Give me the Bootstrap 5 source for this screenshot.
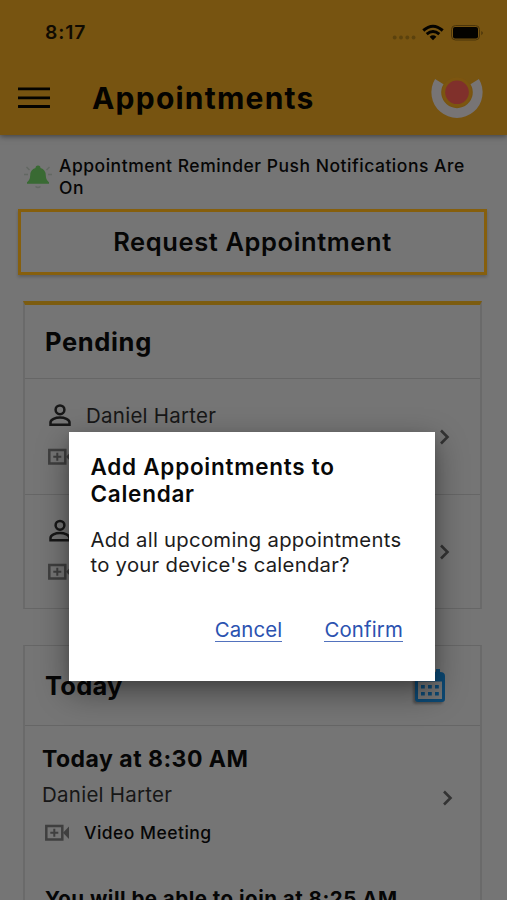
<!DOCTYPE html>
<html lang="en">
<head>
<meta charset="utf-8">
<meta name="viewport" content="width=device-width, initial-scale=1">
<title>Appointments</title>
<link rel="stylesheet" href="https://cdn.jsdelivr.net/npm/bootstrap@5.3.0/dist/css/bootstrap.min.css">
<style>
body{font-family:Inter,"Liberation Sans",sans-serif;background:#757575;color:#060606;height:900px;overflow:hidden}
.screen{height:900px}
svg{display:block;flex:none}
.topbar{height:135px;background:#775411;color:#040300;box-shadow:0 1px 6px rgba(0,0,0,.5)}
.statusbar{height:65px;padding:0 23px 0 45px}
.clock{font-size:19.3px;font-weight:600;letter-spacing:.85px;line-height:1;padding-top:1px;color:#100b02}
.titlebar{height:65px;padding:0 23px 0 18px}
.page-title{font-size:30px;font-weight:700;letter-spacing:1.22px;line-height:36px;margin:0 0 0 42px}
.notice{padding:20px 24px 0;height:74px;font-size:17.5px;font-weight:500;letter-spacing:.52px;line-height:22px}
.bell{margin:9px 7px 0 0}
.request{margin:0 20px 0 18px;height:66px;border:3px solid #865f0d;border-radius:0;font-size:25.5px;font-weight:600;letter-spacing:.6px;color:#060606;box-shadow:0 2px 3px rgba(0,0,0,.2)}
.panel{margin:0 25px 0 23px;border:1px solid #666;border-left:2px solid #6a6a6a;border-right:2px solid #6a6a6a}
.panel-gold{margin-top:26px;border-top:4px solid #7c5c10}
.panel-today{margin-top:36px;height:300px}
.panel-head{font-size:25.5px;font-weight:700;line-height:30px;margin:0;padding:0 34px 0 20px;border-bottom:1px solid #666}
.head-pending{height:74px;letter-spacing:.65px}
.head-today{height:80px;letter-spacing:.25px}
.entry{padding:0 30px 0 23px;height:115px}
.entry + .entry{border-top:1px solid #666;height:114px}
.who{margin-bottom:20px}
.person-name{font-size:20.5px;letter-spacing:.25px;line-height:24px;color:#171717}
.visit{padding:19px 27px 0 17px}
.slot{font-size:23px;font-weight:700;letter-spacing:.48px;line-height:28px}
.kind{font-size:17.5px;font-weight:500;letter-spacing:.48px;line-height:22px}
.join{font-size:20.5px;font-weight:700;letter-spacing:.5px;line-height:24px;white-space:nowrap;margin:43px 0 0 20px}
.dialog-box{left:69px;top:432px;width:366px;height:249px;padding:21px 22px;background:#fff;box-shadow:0 11px 30px rgba(0,0,0,.42),0 4px 9px rgba(0,0,0,.12)}
.dialog-title{font-size:22.5px;font-weight:600;letter-spacing:.74px;line-height:27px;margin:0 0 0 -.5px;color:#080808}
.dialog-text{font-size:20.3px;letter-spacing:.27px;line-height:25px;margin:20px -10px 0 -.5px;color:#1c1c1c}
.dialog-actions{gap:42px;margin:41px 10px 0 0}
.dialog-link{font-size:20.4px;letter-spacing:.15px;line-height:23px;color:#2b52b0;text-decoration:none;border-bottom:1.5px solid #5272bd}
</style>
</head>
<body>
<svg width="0" height="0" class="position-absolute" aria-hidden="true">
  <symbol id="person" viewBox="0 0 24 23"><g fill="none" stroke="#171717" stroke-width="2.500"><circle cx="12" cy="5.800" r="4.400"/><path d="M2.500 20.800v-2.300c0-3 5-5 9.500-5s9.500 2 9.500 5v2.300Z"/></g></symbol>
  <symbol id="video" viewBox="0 0 25 18"><rect x="1.300" y="2" width="16" height="13.500" fill="none" stroke="#3f3f3f" stroke-width="2.500"/><path d="M9.300 4.800v8M5.300 8.800h8" stroke="#3f3f3f" stroke-width="2"/><path d="M18 8.800l6-6.300v12.600Z" fill="#3f3f3f"/></symbol>
  <symbol id="chevron" viewBox="0 0 12 16"><path d="M3 1.500l6.500 6.500L3 14.500" fill="none" stroke="#333" stroke-width="2.600"/></symbol>
</svg>
<div class="screen position-relative overflow-hidden">
  <header class="topbar position-relative">
    <div class="statusbar d-flex align-items-center justify-content-between">
      <span class="clock">8:17</span>
      <svg width="92" height="18" viewBox="0 0 92 18">
        <g fill="#5b420d"><circle cx="2.700" cy="13.500" r="1.900"/><circle cx="9" cy="13.500" r="1.900"/><circle cx="15.300" cy="13.500" r="1.900"/><circle cx="21.600" cy="13.500" r="1.900"/></g>
        <g fill="none" stroke="#040300" stroke-width="3"><path d="M31.300 6.500Q41-2 50.700 6.500"/><path d="M34.700 10.200Q41 4.800 47.300 10.200"/></g>
        <path d="M37.600 12.800Q41 9.900 44.400 12.800L41 16.200Z" fill="#040300"/>
        <rect x="59.500" y="1.500" width="28" height="14.500" rx="4" fill="none" stroke="#4a350b"/>
        <rect x="61" y="3" width="25" height="11.500" rx="2" fill="#040300"/>
        <path d="M89.300 7v4.200q3.200-2.100 0-4.200Z" fill="#4a350b"/>
      </svg>
    </div>
    <div class="titlebar d-flex align-items-center">
      <svg width="32" height="22" viewBox="0 0 32 22"><path d="M.500 1.800h31M.500 10.800h31M.500 19.500h31" stroke="#040300" stroke-width="2.800" stroke-linecap="round"/></svg>
      <h1 class="page-title">Appointments</h1>
      <svg class="ms-auto" width="54" height="42" viewBox="0 0 54 42">
        <path d="M9.300 4.600A20.700 20.700 0 1 0 44.700 4.600" fill="none" stroke="#777475" stroke-width="9.800"/>
        <circle cx="27" cy="15.300" r="14.800" fill="#7c5510"/><circle cx="27" cy="15.300" r="11.800" fill="#80302b"/>
      </svg>
    </div>
  </header>

  <section class="notice d-flex">
    <svg class="bell" width="28" height="27" viewBox="0 0 28 27">
      <path d="M3 19.800v-1.500q3-2 3.200-6.800 0-6 5.300-7.500 0-2.500 2.500-2.500t2.500 2.500q5.300 1.500 5.300 7.500 .2 4.800 3.200 6.800v1.500Z" fill="#396a33"/>
      <path d="M2.500 3l3 3M25.500 3l-3 3M0 10.500h4M24 10.500h4M11.500 22.500q2.500 2 5 0" fill="none" stroke="#636863" stroke-width="1.500"/>
    </svg>
    <span>Appointment Reminder Push Notifications Are<br>On</span>
  </section>

  <div class="d-grid"><button type="button" class="btn request p-0">Request Appointment</button></div>

  <section class="panel panel-gold">
    <h2 class="panel-head head-pending d-flex align-items-center">Pending</h2>
    <div class="entry d-flex align-items-center justify-content-between">
      <div class="pb-1">
        <div class="who d-flex align-items-center">
          <svg width="24" height="23"><use href="#person"/></svg>
          <span class="person-name ms-3" style="text-indent:-2px">Daniel Harter</span>
        </div>
        <svg width="25" height="18"><use href="#video"/></svg>
      </div>
      <svg width="12" height="16"><use href="#chevron"/></svg>
    </div>
    <div class="entry d-flex align-items-center justify-content-between">
      <div class="pb-1">
        <div class="who d-flex align-items-center">
          <svg width="24" height="24"><use href="#person"/></svg>
        </div>
        <svg width="25" height="18"><use href="#video"/></svg>
      </div>
      <svg width="12" height="16"><use href="#chevron"/></svg>
    </div>
  </section>

  <section class="panel panel-today">
    <h2 class="panel-head head-today d-flex align-items-center justify-content-between">Today
      <svg width="32" height="36" viewBox="0 0 32 36" style="filter:drop-shadow(-2px 2px 1px rgba(0,0,0,.3))"><path d="M5 4h3V1h4v3h10V1h4v3q5 0 5 4v23q0 3-3 3H4q-3 0-3-3V8q0-4 4-4Z" fill="#0c4974"/><path d="M4 13.500h24V31H4Z" fill="#757575"/><path d="M7 17h3.800v3.500H7zM14 17h3.800v3.500H14zM21 17h3.800v3.500H21zM7 24h3.800v3.500H7zM14 24h3.800v3.500H14zM21 24h3.800v3.500H21z" fill="#0c4974"/></svg>
    </h2>
    <div class="visit d-flex align-items-center justify-content-between">
      <div>
        <div class="slot">Today at 8:30 AM</div>
        <div class="person-name" style="margin-top:10px">Daniel Harter</div>
        <div class="d-flex align-items-center" style="margin:15px 0 0 3px">
          <svg width="25" height="18"><use href="#video"/></svg>
          <span class="kind" style="margin-left:14px">Video Meeting</span>
        </div>
      </div>
      <svg style="margin-top:7px" width="12" height="16"><use href="#chevron"/></svg>
    </div>
    <div class="join">You will be able to join at 8:25 AM</div>
  </section>

  <div class="dialog-box position-absolute" role="dialog" aria-modal="true">
    <h2 class="dialog-title">Add Appointments to<br>Calendar</h2>
    <p class="dialog-text">Add all upcoming appointments<br>to your device's calendar?</p>
    <div class="dialog-actions d-flex justify-content-end">
      <a href="#" class="dialog-link">Cancel</a>
      <a href="#" class="dialog-link">Confirm</a>
    </div>
  </div>
</div>
<script src="https://cdn.jsdelivr.net/npm/bootstrap@5.3.0/dist/js/bootstrap.bundle.min.js"></script>
</body>
</html>
